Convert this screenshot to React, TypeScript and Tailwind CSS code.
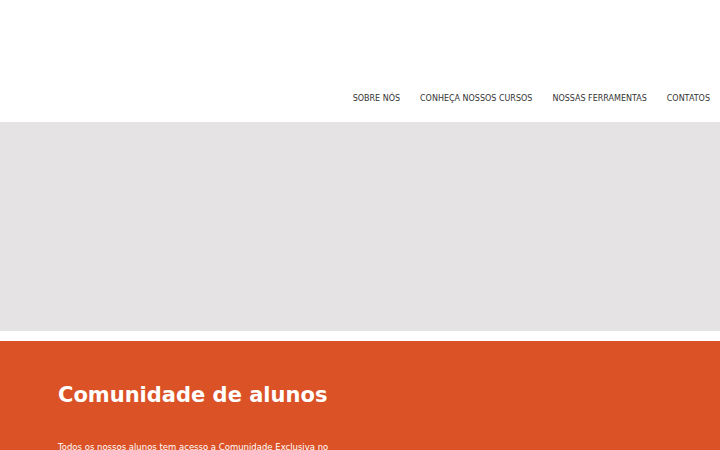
export default function App() {
  const links = ["SOBRE NÓS", "CONHEÇA NOSSOS CURSOS", "NOSSAS FERRAMENTAS", "CONTATOS"];

  return (
    <div className="w-[720px] h-[450px] overflow-hidden bg-white font-['DejaVu_Sans',sans-serif]">
      {/* Header */}
      <header className="h-[122px] flex items-end justify-end pr-[10px] pb-[18px]">
        <nav className="flex gap-[20px]">
          {links.map((l) => (
            <a key={l} href="#" className="text-[8px] leading-[10px] text-[#333333]">
              {l}
            </a>
          ))}
        </nav>
      </header>

      {/* Banner */}
      <div className="h-[209px] bg-[#e5e3e4]" />

      <div className="h-[10px]" />

      {/* Community */}
      <section className="bg-[#db5227] px-[58px] pt-[40px] h-[200px]">
        <h2 className="text-[21px] leading-[28px] font-bold text-white">Comunidade de alunos</h2>
        <p className="mt-[31px] text-[8.5px] leading-[14px] text-white max-w-[290px]">
          Todos os nossos alunos tem acesso a Comunidade Exclusiva no
        </p>
      </section>
    </div>
  );
}
